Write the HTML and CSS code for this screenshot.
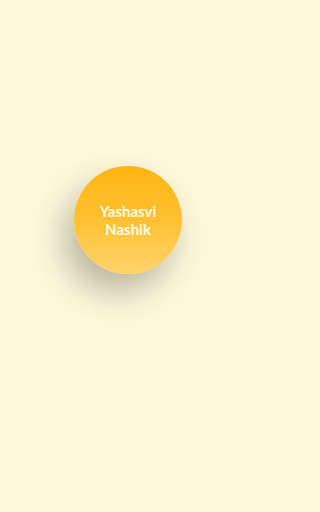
FILE: index.html
```html
<!DOCTYPE html>
<html>
<head>
<meta charset="utf-8">
<link rel="stylesheet" href="styles.css">
</head>
<body>
<div class="screen">
  <div class="badge">
    <span class="name">Yashasvi<br>Nashik</span>
  </div>
</div>
</body>
</html>
```
FILE: styles.css
```css
html, body {
  margin: 0;
  padding: 0;
  background: #fef9dd;
}
.screen {
  width: 256px;
  height: 512px;
  display: flex;
  align-items: center;
  justify-content: center;
  background: #fef9dd;
  padding-bottom: 72px;
  box-sizing: border-box;
}
.badge {
  width: 108px;
  height: 108px;
  border-radius: 50%;
  background: linear-gradient(180deg, #ffb511 0%, #ffc132 50%, #ffd36b 100%);
  box-shadow: -10px 18px 34px rgba(60, 60, 40, 0.35);
  display: flex;
  align-items: center;
  justify-content: center;
  text-align: center;
}
.name {
  font-family: Lato, "Noto Sans", sans-serif;
  font-weight: 700;
  font-size: 15px;
  line-height: 18px;
  color: #fffbe8;
}
```
